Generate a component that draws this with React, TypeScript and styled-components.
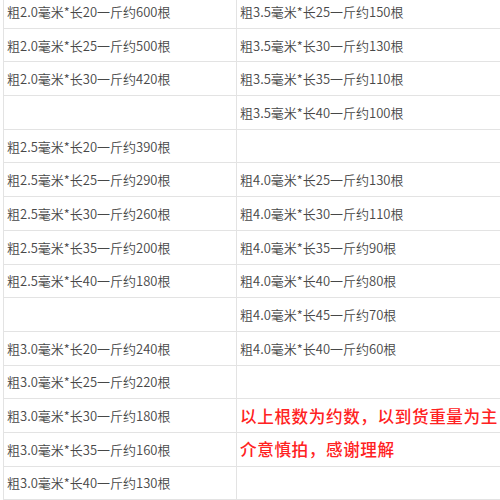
import React from "react";
import styled, { createGlobalStyle } from "styled-components";

const GlobalStyle = createGlobalStyle`
  html, body {
    margin: 0;
    padding: 0;
    background: #ffffff;
    overflow: hidden;
  }
  body {
    font-family: "Noto Sans CJK SC", "Noto Sans", sans-serif;
  }
`;

const Page = styled.div`
  width: 500px;
  height: 500px;
  overflow: hidden;
  padding-left: 3px;
  box-sizing: border-box;
`;

const Sheet = styled.div`
  display: grid;
  grid-template-columns: 233px 300px;
  grid-auto-rows: 33.7px;
  margin-top: -5px;
  border-left: 1px solid #e3e3e3;
`;

const Cell = styled.div<{ $note?: boolean }>`
  display: flex;
  align-items: center;
  padding-left: 3px;
  border-bottom: 1px solid #e3e3e3;
  border-right: 1px solid #e3e3e3;
  box-sizing: border-box;
  white-space: nowrap;
  overflow: hidden;
  font-size: ${(p) => (p.$note ? "16.6px" : "13px")};
  font-weight: ${(p) => (p.$note ? 500 : 350)};
  color: ${(p) => (p.$note ? "#ff2222" : "#474747")};
  letter-spacing: ${(p) => (p.$note ? "0.6px" : "0")};
`;

type Row = [string, string, boolean?];

const rows: Row[] = [
  ["粗2.0毫米*长20一斤约600根", "粗3.5毫米*长25一斤约150根"],
  ["粗2.0毫米*长25一斤约500根", "粗3.5毫米*长30一斤约130根"],
  ["粗2.0毫米*长30一斤约420根", "粗3.5毫米*长35一斤约110根"],
  ["", "粗3.5毫米*长40一斤约100根"],
  ["粗2.5毫米*长20一斤约390根", ""],
  ["粗2.5毫米*长25一斤约290根", "粗4.0毫米*长25一斤约130根"],
  ["粗2.5毫米*长30一斤约260根", "粗4.0毫米*长30一斤约110根"],
  ["粗2.5毫米*长35一斤约200根", "粗4.0毫米*长35一斤约90根"],
  ["粗2.5毫米*长40一斤约180根", "粗4.0毫米*长40一斤约80根"],
  ["", "粗4.0毫米*长45一斤约70根"],
  ["粗3.0毫米*长20一斤约240根", "粗4.0毫米*长40一斤约60根"],
  ["粗3.0毫米*长25一斤约220根", ""],
  ["粗3.0毫米*长30一斤约180根", "以上根数为约数，以到货重量为主", true],
  ["粗3.0毫米*长35一斤约160根", "介意慎拍，感谢理解", true],
  ["粗3.0毫米*长40一斤约130根", ""],
];

export default function App() {
  return (
    <Page>
      <GlobalStyle />
      <Sheet>
        {rows.map(([left, right, note], i) => (
          <React.Fragment key={i}>
            <Cell>{left}</Cell>
            <Cell $note={note}>{right}</Cell>
          </React.Fragment>
        ))}
      </Sheet>
    </Page>
  );
}
